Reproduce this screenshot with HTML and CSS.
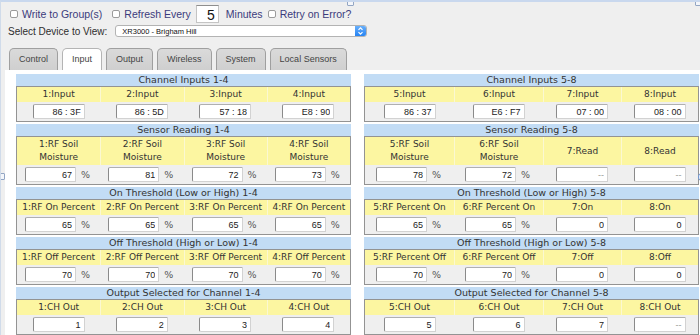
FILE: index.html
```html
<!DOCTYPE html>
<html lang="en">
<head>
    <meta charset="UTF-8">
    <meta name="viewport" content="width=device-width, initial-scale=1.0">
    <title>Input</title>
    <link rel="stylesheet" href="styles.css">
</head>
<body>
    <div class="frame">
        <!-- resize handles of the frame -->
        <span class="handle handle-top"></span>
        <span class="handle handle-corner"></span>
        <span class="handle handle-left"></span>
        <span class="handle handle-right"></span>

        <div class="options">
            <label class="opt opt-first"><input type="checkbox"> Write to Group(s)</label>
            <label class="opt"><input type="checkbox"> Refresh Every</label>
            <input type="text" class="minutes" value="5">
            <span class="opt-text">Minutes</span>
            <label class="opt opt-last"><input type="checkbox"> Retry on Error?</label>
        </div>

        <div class="device-row">
            <span class="device-label">Select Device to View:</span>
            <div class="select">
                <span class="select-text">XR3000 - Brigham Hill</span>
                <span class="select-btn">
                    <svg width="11" height="12" viewBox="0 0 11 12">
                        <path d="M3.5 4.8 L5.5 2.8 L7.5 4.8" fill="none" stroke="#fff" stroke-width="1.2"/>
                        <path d="M3.5 7.2 L5.5 9.2 L7.5 7.2" fill="none" stroke="#fff" stroke-width="1.2"/>
                    </svg>
                </span>
            </div>
        </div>

        <div class="tabs">
            <div class="tab">Control</div>
            <div class="tab active">Input</div>
            <div class="tab">Output</div>
            <div class="tab">Wireless</div>
            <div class="tab">System</div>
            <div class="tab">Local Sensors</div>
        </div>

        <div class="panel">
            <!-- Channels 1-4 -->
            <div class="col">
                <div class="sect">
                    <div class="sect-title">Channel Inputs 1-4</div>
                    <div class="sect-body">
                        <div class="lbl">1:Input</div>
                        <div class="lbl">2:Input</div>
                        <div class="lbl">3:Input</div>
                        <div class="lbl">4:Input</div>
                        <div class="val"><input class="field" value="86 : 3F"></div>
                        <div class="val"><input class="field" value="86 : 5D"></div>
                        <div class="val"><input class="field" value="57 : 18"></div>
                        <div class="val"><input class="field" value="E8 : 90"></div>
                    </div>
                </div>

                <div class="sect">
                    <div class="sect-title">Sensor Reading 1-4</div>
                    <div class="sect-body">
                        <div class="lbl tall">1:RF Soil<br>Moisture</div>
                        <div class="lbl tall">2:RF Soil<br>Moisture</div>
                        <div class="lbl tall">3:RF Soil<br>Moisture</div>
                        <div class="lbl tall">4:RF Soil<br>Moisture</div>
                        <div class="val"><input class="field short" value="67"><span class="pct">%</span></div>
                        <div class="val"><input class="field short" value="81"><span class="pct">%</span></div>
                        <div class="val"><input class="field short" value="72"><span class="pct">%</span></div>
                        <div class="val"><input class="field short" value="73"><span class="pct">%</span></div>
                    </div>
                </div>

                <div class="sect">
                    <div class="sect-title">On Threshold (Low or High) 1-4</div>
                    <div class="sect-body">
                        <div class="lbl">1:RF On Percent</div>
                        <div class="lbl">2:RF On Percent</div>
                        <div class="lbl">3:RF On Percent</div>
                        <div class="lbl">4:RF On Percent</div>
                        <div class="val"><input class="field short" value="65"><span class="pct">%</span></div>
                        <div class="val"><input class="field short" value="65"><span class="pct">%</span></div>
                        <div class="val"><input class="field short" value="65"><span class="pct">%</span></div>
                        <div class="val"><input class="field short" value="65"><span class="pct">%</span></div>
                    </div>
                </div>

                <div class="sect">
                    <div class="sect-title">Off Threshold (High or Low) 1-4</div>
                    <div class="sect-body">
                        <div class="lbl">1:RF Off Percent</div>
                        <div class="lbl">2:RF Off Percent</div>
                        <div class="lbl">3:RF Off Percent</div>
                        <div class="lbl">4:RF Off Percent</div>
                        <div class="val"><input class="field short" value="70"><span class="pct">%</span></div>
                        <div class="val"><input class="field short" value="70"><span class="pct">%</span></div>
                        <div class="val"><input class="field short" value="70"><span class="pct">%</span></div>
                        <div class="val"><input class="field short" value="70"><span class="pct">%</span></div>
                    </div>
                </div>

                <div class="sect">
                    <div class="sect-title">Output Selected for Channel 1-4</div>
                    <div class="sect-body">
                        <div class="lbl">1:CH Out</div>
                        <div class="lbl">2:CH Out</div>
                        <div class="lbl">3:CH Out</div>
                        <div class="lbl">4:CH Out</div>
                        <div class="val"><input class="field" value="1"></div>
                        <div class="val"><input class="field" value="2"></div>
                        <div class="val"><input class="field" value="3"></div>
                        <div class="val"><input class="field" value="4"></div>
                    </div>
                </div>
            </div>

            <!-- Channels 5-8 -->
            <div class="col col-right">
                <div class="sect">
                    <div class="sect-title">Channel Inputs 5-8</div>
                    <div class="sect-body">
                        <div class="lbl">5:Input</div>
                        <div class="lbl">6:Input</div>
                        <div class="lbl">7:Input</div>
                        <div class="lbl">8:Input</div>
                        <div class="val"><input class="field" value="86 : 37"></div>
                        <div class="val"><input class="field" value="E6 : F7"></div>
                        <div class="val"><input class="field" value="07 : 00"></div>
                        <div class="val"><input class="field" value="08 : 00"></div>
                    </div>
                </div>

                <div class="sect">
                    <div class="sect-title">Sensor Reading 5-8</div>
                    <div class="sect-body">
                        <div class="lbl tall">5:RF Soil<br>Moisture</div>
                        <div class="lbl tall">6:RF Soil<br>Moisture</div>
                        <div class="lbl tall">7:Read</div>
                        <div class="lbl tall">8:Read</div>
                        <div class="val"><input class="field short" value="78"><span class="pct">%</span></div>
                        <div class="val"><input class="field short" value="72"><span class="pct">%</span></div>
                        <div class="val"><input class="field dim" value="--"></div>
                        <div class="val"><input class="field dim" value="--"></div>
                    </div>
                </div>

                <div class="sect">
                    <div class="sect-title">On Threshold (Low or High) 5-8</div>
                    <div class="sect-body">
                        <div class="lbl">5:RF Percent On</div>
                        <div class="lbl">6:RF Percent On</div>
                        <div class="lbl">7:On</div>
                        <div class="lbl">8:On</div>
                        <div class="val"><input class="field short" value="65"><span class="pct">%</span></div>
                        <div class="val"><input class="field short" value="65"><span class="pct">%</span></div>
                        <div class="val"><input class="field" value="0"></div>
                        <div class="val"><input class="field" value="0"></div>
                    </div>
                </div>

                <div class="sect">
                    <div class="sect-title">Off Threshold (High or Low) 5-8</div>
                    <div class="sect-body">
                        <div class="lbl">5:RF Percent Off</div>
                        <div class="lbl">6:RF Percent Off</div>
                        <div class="lbl">7:Off</div>
                        <div class="lbl">8:Off</div>
                        <div class="val"><input class="field short" value="70"><span class="pct">%</span></div>
                        <div class="val"><input class="field short" value="70"><span class="pct">%</span></div>
                        <div class="val"><input class="field" value="0"></div>
                        <div class="val"><input class="field" value="0"></div>
                    </div>
                </div>

                <div class="sect">
                    <div class="sect-title">Output Selected for Channel 5-8</div>
                    <div class="sect-body">
                        <div class="lbl">5:CH Out</div>
                        <div class="lbl">6:CH Out</div>
                        <div class="lbl">7:CH Out</div>
                        <div class="lbl">8:CH Out</div>
                        <div class="val"><input class="field" value="5"></div>
                        <div class="val"><input class="field" value="6"></div>
                        <div class="val"><input class="field" value="7"></div>
                        <div class="val"><input class="field dim" value="--"></div>
                    </div>
                </div>
            </div>
        </div>
    </div>
</body>
</html>
```

FILE: styles.css
```css
/* Page */
body {
    margin: 0;
    background-color: #efefef;
    font-family: 'Liberation Sans', Arial, sans-serif;
    color: #333;
}

.frame {
    position: relative;
    box-sizing: border-box;
    height: 100vh;
    border-top: 2px solid #c9d8ee;
    border-left: 1px solid #d0dbea;
    overflow: hidden;
}

/* Frame handles */
.handle {
    position: absolute;
    width: 5px;
    height: 5px;
    border: 1px solid #93a6c4;
    border-radius: 1px;
    background-color: #f4f6fa;
}

.handle-top {
    top: -3px;
    left: 346px;
}

.handle-corner {
    top: -3px;
    right: -2px;
}

.handle-left {
    top: 171px;
    left: -3px;
}

.handle-right {
    top: 170px;
    right: -8px;
    width: 8px;
    height: 8px;
    border-radius: 50%;
    border-color: #6b95d6;
}

/* Options row */
.options {
    display: flex;
    align-items: center;
    height: 18px;
    margin-top: 3px;
    padding-left: 9px;
    font-size: 10.5px;
    color: #3b3b7c;
}

.opt {
    display: flex;
    align-items: center;
    gap: 4px;
    margin-right: 5px;
}

.opt-first {
    margin-right: 10px;
}

.opt-last {
    margin-right: 0;
}

.opt input[type="checkbox"] {
    appearance: none;
    width: 8px;
    height: 8px;
    margin: 0;
    border: 1px solid #9b9b9b;
    border-radius: 2px;
    background-color: #fff;
}

.minutes {
    box-sizing: border-box;
    width: 23px;
    height: 18px;
    margin: 0 7px 0 0;
    padding: 2px 3px 0 0;
    border: 1px solid #c4c4c4;
    border-top-color: #8e8e8e;
    font-family: 'Liberation Sans', Arial, sans-serif;
    font-size: 14px;
    color: #111;
    text-align: right;
    background-color: #fff;
}

.opt-text {
    margin-right: 5px;
}

/* Device select */
.device-row {
    display: flex;
    align-items: center;
    height: 14px;
    margin-top: 1px;
    padding-left: 7px;
    font-size: 10px;
    color: #2e2e2e;
}

.device-label {
    margin-right: 8px;
}

.select {
    display: flex;
    align-items: center;
    box-sizing: border-box;
    width: 252px;
    height: 12px;
    border: 1px solid #b3b3b3;
    border-radius: 3px;
    background-color: #fff;
    overflow: hidden;
}

.select-text {
    flex: 1;
    padding-left: 6px;
    font-size: 7.5px;
    color: #111;
}

.select-btn {
    display: flex;
    width: 11px;
    height: 12px;
    background: linear-gradient(#6fb4fc, #1f7ff2);
}

/* Tabs */
.tabs {
    display: flex;
    gap: 4px;
    margin-top: 10px;
    padding-left: 8px;
}

.tab {
    box-sizing: border-box;
    height: 22px;
    padding: 0 9px;
    line-height: 21px;
    font-size: 9px;
    color: #444;
    background: linear-gradient(#dadada, #cfcfcf);
    border: 1px solid #9f9f9f;
    border-bottom: none;
    border-radius: 5px 5px 0 0;
}

.tab.active {
    background: #fff;
    border-color: #b4b4b4;
}

/* Main panel */
.panel {
    display: flex;
    gap: 13px;
    margin-left: 4px;
    padding: 4px 0 0 11px;
    height: 100%;
    background-color: #fff;
}

.col {
    display: flex;
    flex-direction: column;
    gap: 2px;
    width: 335px;
    flex-shrink: 0;
}

.sect-title {
    height: 12px;
    line-height: 12px;
    text-align: center;
    font-family: 'DejaVu Sans', Verdana, sans-serif;
    font-size: 9.5px;
    color: #333;
    background-color: #c2dcf5;
}

.sect-body {
    display: grid;
    grid-template-columns: repeat(4, 1fr);
    border: 1px solid #939393;
}

.col-right .sect-body {
    grid-template-columns: 89px 89px 78px 1fr;
}

.lbl {
    display: flex;
    align-items: center;
    justify-content: center;
    padding: 1px 0;
    line-height: 13px;
    text-align: center;
    white-space: nowrap;
    font-family: 'DejaVu Sans', Verdana, sans-serif;
    font-size: 9px;
    color: #333;
    background-color: #fcf6a1;
}

.lbl + .lbl {
    border-left: 1px solid #fbf8d2;
}

.val {
    display: flex;
    align-items: center;
    justify-content: center;
    gap: 5px;
    height: 19px;
    background-color: #efefef;
}

.field {
    box-sizing: border-box;
    width: 52px;
    height: 15px;
    margin: 0;
    padding: 0 3px 0 0;
    border: 1px solid #d2d2d2;
    border-left-color: #8a8a8a;
    border-top-color: #b0b0b0;
    border-radius: 2px 0 0 2px;
    font-family: 'Liberation Sans', Arial, sans-serif;
    font-size: 9px;
    color: #222;
    text-align: right;
    background-color: #fff;
}

.field.short {
    width: 51px;
}

.field.dim {
    color: #9a9a9a;
}

.pct {
    font-family: 'DejaVu Sans', Verdana, sans-serif;
    font-size: 9.5px;
    color: #555;
    margin-right: 2px;
}
```
